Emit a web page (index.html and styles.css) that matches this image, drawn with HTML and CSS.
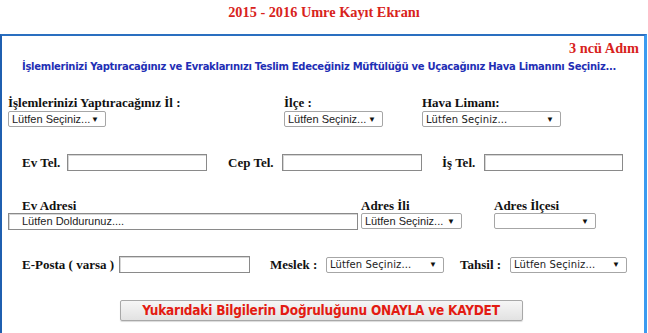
FILE: index.html
```html
<!DOCTYPE html>
<html lang="tr">
<head>
<meta charset="utf-8">
<title>Umre Kayıt</title>
<link rel="stylesheet" href="styles.css">
</head>
<body>
<h1 class="title">2015 - 2016 Umre Kayıt Ekranı</h1>
<div class="panel">
  <div class="step">3 ncü Adım</div>
  <div class="info">İşlemlerinizi Yaptıracağınız ve Evraklarınızı Teslim Edeceğiniz Müftülüğü ve Uçacağınız Hava Limanını Seçiniz...</div>

  <div class="row row1">
    <div class="cell c-il">
      <label class="lbl">İşlemlerinizi Yaptıracağınız İl :</label>
      <div class="sel w98"><span>Lütfen Seçiniz...</span><i>▼</i></div>
    </div>
    <div class="cell c-ilce">
      <label class="lbl">İlçe :</label>
      <div class="sel w99"><span>Lütfen Seçiniz...</span><i>▼</i></div>
    </div>
    <div class="cell">
      <label class="lbl">Hava Limanı:</label>
      <div class="sel w139 serifsel"><span>Lütfen Seçiniz...</span><i>▼</i></div>
    </div>
  </div>

  <div class="row row2">
    <label class="lbl ev">Ev Tel.</label><div class="inp w140"></div>
    <label class="lbl cep">Cep Tel.</label><div class="inp w140"></div>
    <label class="lbl is">İş Tel.</label><div class="inp w139"></div>
  </div>

  <div class="row row3">
    <div class="cell c-adres">
      <label class="lbl ind">Ev Adresi</label>
      <div class="inp w350 txt">Lütfen Doldurunuz....</div>
    </div>
    <div class="cell c-adil">
      <label class="lbl">Adres İli</label>
      <div class="sel w101"><span>Lütfen Seçiniz...</span><i>▼</i></div>
    </div>
    <div class="cell">
      <label class="lbl">Adres İlçesi</label>
      <div class="sel w102"><span></span><i>▼</i></div>
    </div>
  </div>

  <div class="row row4">
    <label class="lbl ev">E-Posta ( varsa )</label><div class="inp w131"></div>
    <label class="lbl meslek">Meslek :</label><div class="sel w118 serifsel"><span>Lütfen Seçiniz...</span><i>▼</i></div>
    <label class="lbl tahsil">Tahsil :</label><div class="sel w117 serifsel"><span>Lütfen Seçiniz...</span><i>▼</i></div>
  </div>

  <div class="btnrow">
    <button class="btn">Yukarıdaki Bilgilerin Doğruluğunu ONAYLA ve KAYDET</button>
  </div>
</div>
</body>
</html>
```
FILE: styles.css
```css
* { box-sizing: border-box; }
html, body { margin: 0; padding: 0; background: #fff; }
body { width: 648px; height: 333px; overflow: hidden; font-family: "Liberation Serif", serif; }

.title {
  margin: 0;
  padding-top: 4px;
  height: 34px;
  text-align: center;
  font-family: "Liberation Serif", serif;
  font-weight: bold;
  font-size: 14.3px;
  color: #d8231c;
}

.panel {
  border-top: 2px solid #2a6fc0;
  border-left: 2px solid #1f5fb0;
  border-right: 3px solid #3b9bf0;
  width: 647px;
  height: 299px;
}

.step {
  text-align: right;
  padding-right: 5px;
  margin-top: 4px;
  font-weight: bold;
  font-size: 14.3px;
  color: #d8231c;
  line-height: 16px;
}

.info {
  margin-left: 20px;
  margin-top: 5px;
  font-family: "DejaVu Sans", sans-serif;
  font-weight: bold;
  font-size: 10px;
  letter-spacing: -0.28px;
  color: #1f2fb5;
  line-height: 12px;
  white-space: nowrap;
}

.row { display: flex; }
.lbl {
  font-family: "Liberation Serif", serif;
  font-weight: bold;
  font-size: 13px;
  color: #111;
  line-height: 14px;
  white-space: nowrap;
}
.cell { display: flex; flex-direction: column; align-items: flex-start; }

.row1 { margin-top: 23px; margin-left: 6px; }
.c-il { width: 276px; }
.c-ilce { width: 138px; }

.sel {
  display: flex;
  align-items: center;
  justify-content: space-between;
  height: 16px;
  border: 1px solid #a6a6a6;
  border-radius: 2px;
  background: #fff;
  padding: 0 6px 0 3px;
  font-family: "Liberation Sans", sans-serif;
  font-size: 11px;
  color: #222;
}
.row1 .sel { margin-top: 1px; }
.sel i { font-style: normal; font-size: 8px; color: #111; }
.serifsel span { font-family: "DejaVu Sans", sans-serif; font-size: 10px; letter-spacing: 0.1px; }

.inp {
  height: 17px;
  border: 1px solid #8a8a8a;
  box-shadow: inset 1px 1px 0 #d6d6d6;
  background: #fff;
}
.txt {
  font-family: "Liberation Sans", sans-serif;
  font-size: 11px;
  color: #222;
  padding-left: 13px;
  line-height: 15px;
}

.w98 { width: 98px; } .w99 { width: 99px; } .w139 { width: 139px; } .w140 { width: 140px; }
.w350 { width: 350px; } .w101 { width: 101px; } .w102 { width: 102px; } .w131 { width: 131px; }
.w118 { width: 118px; } .w117 { width: 117px; }

.row2 { margin-top: 27px; align-items: center; }
.row2 .ev { margin-left: 20px; width: 45px; }
.row2 .cep { margin-left: 21px; width: 54px; }
.row2 .is { margin-left: 20px; width: 42px; }

.row3 { margin-top: 28px; margin-left: 6px; }
.row3 .ind { margin-left: 14px; }
.c-adres { width: 353px; }
.c-adil { width: 133px; }

.row4 { margin-top: 26px; align-items: center; }
.row4 .ev { margin-left: 20px; width: 97px; }
.row4 .meslek { margin-left: 20px; width: 56px; }
.row4 .tahsil { margin-left: 16px; width: 50px; }

.btnrow { display: flex; justify-content: center; margin-top: 27px; padding-right: 4px; }
.btn {
  width: 403px;
  height: 21px;
  border: 1px solid #a8a8a8;
  border-radius: 2px;
  background: linear-gradient(#f6f6f6, #e2e2e2);
  box-shadow: 0 1px 1px rgba(0,0,0,0.15);
  font-family: "DejaVu Sans", sans-serif;
  font-stretch: condensed;
  font-weight: bold;
  font-size: 13.5px;
  letter-spacing: -0.2px;
  color: #e31b12;
  padding: 0;
  line-height: 19px;
}
```
